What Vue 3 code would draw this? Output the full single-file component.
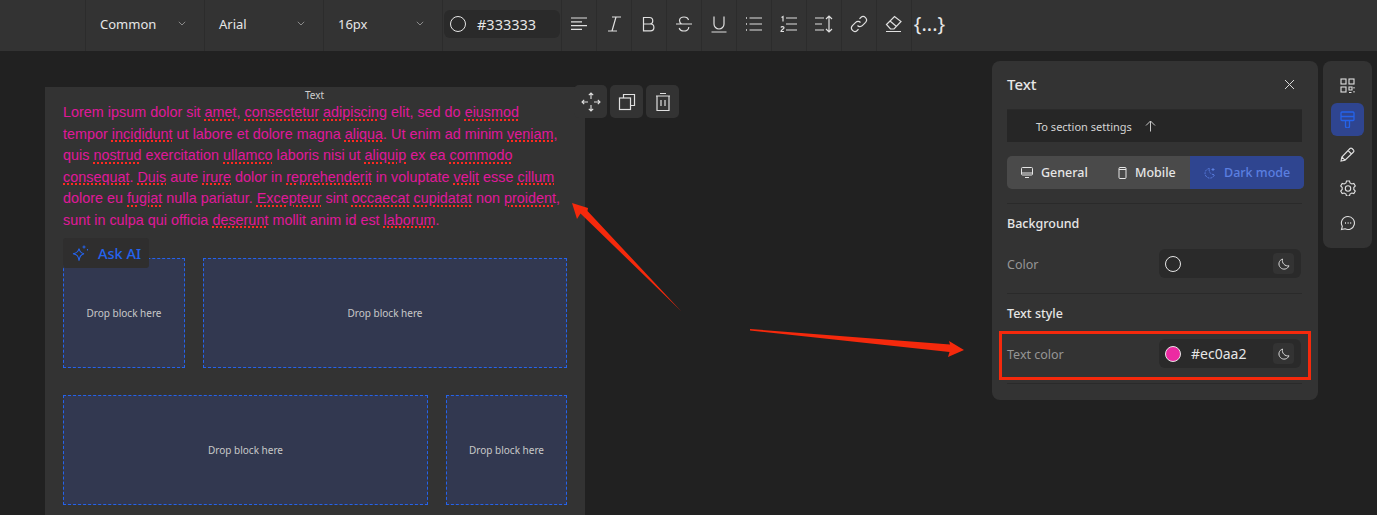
<script setup>
const selects = ['Common', 'Arial', '16px']

const lorem = 'Lorem ipsum dolor sit amet, consectetur adipiscing elit, sed do eiusmod tempor incididunt ut labore et dolore magna aliqua. Ut enim ad minim veniam, quis nostrud exercitation ullamco laboris nisi ut aliquip ex ea commodo consequat. Duis aute irure dolor in reprehenderit in voluptate velit esse cillum dolore eu fugiat nulla pariatur. Excepteur sint occaecat cupidatat non proident, sunt in culpa qui officia deserunt mollit anim id est laborum.'

// words the browser spellchecker flagged
const flagged = ['amet', 'consectetur', 'adipiscing', 'eiusmod', 'incididunt', 'aliqua', 'veniam', 'nostrud', 'ullamco', 'aliquip', 'commodo', 'consequat', 'Duis', 'irure', 'reprehenderit', 'velit', 'cillum', 'fugiat', 'Excepteur', 'occaecat', 'cupidatat', 'proident', 'deserunt', 'laborum']

const words = lorem.split(' ').map((raw) => {
  const word = raw.replace(/[.,]/g, '')
  return { word, tail: raw.slice(word.length), bad: flagged.includes(word) }
})

const dropRows = [
  ['narrow', 'wide'],
  ['wide', 'narrow']
]
</script>

<template>
  <div class="page">
    <header class="toolbar">
      <div class="tb-spacer"></div>
      <div v-for="s in selects" :key="s" class="tb-select">
        <span>{{ s }}</span>
        <svg width="8" height="5" viewBox="0 0 8 5" fill="none" stroke="#8a8a8a" stroke-width="1"><path d="M.8.8 4 4l3.2-3.2" /></svg>
      </div>
      <div class="tb-color">
        <div class="color-box">
          <i class="dot"></i>
          <span>#333333</span>
        </div>
      </div>
      <button class="tb-btn">
        <svg width="18" height="18" viewBox="0 0 18 18" stroke="currentColor" stroke-width="1.2"><path d="M1 3h16M1 6.800h11M1 10.600h16M1 14.400h11" /></svg>
      </button>
      <button class="tb-btn">
        <svg width="18" height="18" viewBox="0 0 18 18" fill="none" stroke="currentColor" stroke-width="1.2"><path d="M7 2h9M3 16h9M11 2 7 16" /></svg>
      </button>
      <button class="tb-btn">
        <svg width="18" height="18" viewBox="0 0 18 18" fill="none" stroke="currentColor" stroke-width="1.2"><path d="M3.500 2.500h6a3.200 3.200 0 0 1 0 6.500h-6zM3.500 9h7a3.400 3.400 0 0 1 0 6.800h-7z" /></svg>
      </button>
      <button class="tb-btn">
        <svg width="18" height="18" viewBox="0 0 18 18" fill="none" stroke="currentColor" stroke-width="1.2"><path d="M1 9h16M13.500 5C13 3 11 2 9 2 6.500 2 4.500 3.300 4.500 5.500c0 1.300.6 2.500 2 3.500M13.800 12c0 2.500-2.300 4-4.800 4-2.300 0-4.300-1-4.800-3" /></svg>
      </button>
      <button class="tb-btn">
        <svg width="18" height="18" viewBox="0 0 18 18" fill="none" stroke="currentColor" stroke-width="1.200"><path d="M4 1.500V9a5 5 0 0 0 10 0V1.500M1.500 17h15" /></svg>
      </button>
      <button class="tb-btn">
        <svg width="18" height="18" viewBox="0 0 18 18" fill="none" stroke="currentColor" stroke-width="1.200"><path d="M4.500 3h12.500M4.500 9h12.500M4.500 15h12.500" /><path d="M1 3h1M1 9h1M1 15h1" stroke-width="1.600" /></svg>
      </button>
      <button class="tb-btn">
        <svg width="18" height="18" viewBox="0 0 18 18" fill="none" stroke="currentColor" stroke-width="1.200"><path d="M6 3h11M6 9h11M6 15h11" /><path d="M1.500 2.500 3 1.500v5M1 12.500c.3-1.300 3-1.300 3 .2 0 1.300-3 2-3 3.800h3" /></svg>
      </button>
      <button class="tb-btn">
        <svg width="20" height="18" viewBox="0 0 20 18" fill="none" stroke="currentColor" stroke-width="1.200"><path d="M1 3h9M1 9h7M1 15h9" /><path d="M15 1v16M12 4l3-3 3 3M12 14l3 3 3-3" /></svg>
      </button>
      <button class="tb-btn">
        <svg width="18" height="18" viewBox="0 0 18 18" fill="none" stroke="currentColor" stroke-width="1.200"><path d="M7.500 10.500a3.300 3.300 0 0 0 4.800.1l3.300-3.300a3.400 3.400 0 0 0-4.800-4.800L9.500 3.800" /><path d="M10.500 7.500a3.300 3.300 0 0 0-4.800-.1l-3.300 3.300a3.400 3.400 0 0 0 4.800 4.800l1.300-1.300" /></svg>
      </button>
      <button class="tb-btn">
        <svg width="18" height="18" viewBox="0 0 18 18" fill="none" stroke="currentColor" stroke-width="1.200"><path d="M1.500 9.500 9.500 1.500l6.500 5-7 7.500H5.500zM5 6l6.500 5.500M1 16.500h15" /></svg>
      </button>
      <div class="tb-var">{...}</div>
    </header>

    <main class="workspace">
      <section class="card">
        <span class="card-label">Text</span>
        <p class="lorem">
          <template v-for="(w, i) in words" :key="i"><span :class="{ bad: w.bad }">{{ w.word }}</span>{{ w.tail }}{{ ' ' }}</template>
        </p>
        <div class="ask-ai">
          <svg width="17" height="17" viewBox="0 0 17 17" fill="none" stroke="currentColor" stroke-width="1.100"><path d="M7 3.500c.6 3 1.800 4.500 5 5.200-3.200.7-4.400 2.400-5 7-.6-4.600-1.800-6.300-6-7 4.200-.7 5.400-2.200 6-5.200z" /><path d="M12 .5v3M10.500 2h3M15.500 4v1.500" /></svg>
          <span>Ask AI</span>
        </div>
        <div class="drops">
          <div v-for="(row, r) in dropRows" :key="r" class="drop-row" :class="row[0]">
            <div v-for="(size, c) in row" :key="c" class="drop">Drop block here</div>
          </div>
        </div>

        <div class="float-tools">
          <button class="float-btn">
            <svg width="20" height="20" viewBox="0 0 20 20" fill="none" stroke="currentColor" stroke-width="1.100"><path d="M10 1v6M10 13v6M1 10h6M13 10h6M7.800 3.200 10 1l2.200 2.200M7.800 16.800 10 19l2.200-2.200M3.200 7.800 1 10l2.200 2.200M16.800 7.800 19 10l-2.200 2.200" /></svg>
          </button>
          <button class="float-btn">
            <svg width="18" height="18" viewBox="0 0 18 18" fill="none" stroke="currentColor" stroke-width="1.200"><rect x="1.500" y="5" width="11" height="11.500" /><path d="M5.500 5V1.500h11V12.500h-4" /></svg>
          </button>
          <button class="float-btn">
            <svg width="18" height="20" viewBox="0 0 18 20" fill="none" stroke="currentColor" stroke-width="1.200"><path d="M2 4h14M6 1.500h6M3 4v14.500h12V4M7 8v6M11 8v6" /></svg>
          </button>
        </div>
      </section>

      <aside class="panel">
        <div class="panel-head">
          <span>Text</span>
          <svg width="11" height="11" viewBox="0 0 11 11" stroke="#d8d8d8" stroke-width="1"><path d="M1 1l9 9M10 1l-9 9" /></svg>
        </div>
        <div class="to-section">
          <span>To section settings</span>
          <svg width="11" height="12" viewBox="0 0 11 12" fill="none" stroke="#c8c8c8" stroke-width="1"><path d="M5.500 11.500V1M1 5.500 5.500 1 10 5.500" /></svg>
        </div>
        <div class="tabs">
          <div class="tab tab-general">
            <svg width="12" height="11" viewBox="0 0 12 11" fill="none" stroke="currentColor" stroke-width="1"><rect x=".5" y=".5" width="11" height="7.500" rx="1" /><path d="M.5 6h11M4 10.500h4" /></svg>
            General
          </div>
          <div class="tab tab-mobile">
            <svg width="9" height="12" viewBox="0 0 9 12" fill="none" stroke="currentColor" stroke-width="1"><rect x="1" y=".5" width="7" height="11" rx="1" /><path d="M1 2.500h7" /></svg>
            Mobile
          </div>
          <div class="tab tab-dark">
            <svg width="12" height="12" viewBox="0 0 12 12" fill="none" stroke="currentColor" stroke-width="1" stroke-dasharray="2 1"><path d="M5.500 1.500a4.800 4.800 0 1 0 5 6 4.500 4.500 0 0 1-5-6z" /><path d="M9 1v3M7.500 2.500h3" stroke-dasharray="none" /></svg>
            Dark mode
          </div>
        </div>

        <div class="group">
          <h4>Background</h4>
          <div class="field">
            <label>Color</label>
            <div class="color-input">
              <i class="dot"></i>
              <span class="hex"></span>
              <button class="moon">
                <svg width="12" height="12" viewBox="0 0 12 12" fill="none" stroke="currentColor" stroke-width="1"><path d="M4.500 1A5.200 5.200 0 1 0 11 7.800 5.500 5.500 0 0 1 4.500 1z" /></svg>
              </button>
            </div>
          </div>
        </div>

        <div class="group">
          <h4>Text style</h4>
          <div class="field">
            <label>Text color</label>
            <div class="color-input">
              <i class="dot pink"></i>
              <span class="hex">#ec0aa2</span>
              <button class="moon">
                <svg width="12" height="12" viewBox="0 0 12 12" fill="none" stroke="currentColor" stroke-width="1"><path d="M4.500 1A5.200 5.200 0 1 0 11 7.800 5.500 5.500 0 0 1 4.500 1z" /></svg>
              </button>
            </div>
          </div>
        </div>
      </aside>

      <nav class="rail">
        <button class="rail-btn">
          <svg width="15" height="15" viewBox="0 0 15 15" fill="none" stroke="currentColor" stroke-width="1.100"><rect x="1" y="1" width="5" height="5" /><rect x="9" y="1" width="5" height="5" /><rect x="1" y="9" width="5" height="5" /><path d="M9 9h3v3H9zM14 9v1.500M14 13v1.500M9 14.500h2.500" /></svg>
        </button>
        <button class="rail-btn active">
          <svg width="15" height="17" viewBox="0 0 15 17" fill="none" stroke="currentColor" stroke-width="1.300"><path d="M2 1h11a1 1 0 0 1 1 1v6.500a1 1 0 0 1-1 1H2a1 1 0 0 1-1-1V2a1 1 0 0 1 1-1zM1 5.500h13M5.500 9.500h4V15a2 2 0 0 1-4 0z" /></svg>
        </button>
        <button class="rail-btn">
          <svg width="15" height="15" viewBox="0 0 15 15" fill="none" stroke="currentColor" stroke-width="1.100"><path d="M1 14l.8-4L10 1.500a1.500 1.500 0 0 1 2 0L13.500 3a1.500 1.500 0 0 1 0 2L5 13.200zM8 3.500 11.500 7M1.800 10 5 13.200" /></svg>
        </button>
        <button class="rail-btn">
          <svg width="16" height="16" viewBox="0 0 16 16" fill="none" stroke="currentColor" stroke-width="1.100"><path d="M6.500 1h3l.5 2 1.800 1 2-.6 1.500 2.600-1.500 1.500v2l1.500 1.500-1.500 2.600-2-.6-1.800 1-.5 2h-3l-.5-2-1.800-1-2 .6L.7 11l1.500-1.500v-2L.7 6l1.500-2.600 2 .6 1.800-1z" /><circle cx="8" cy="8.500" r="2.700" /></svg>
        </button>
        <button class="rail-btn">
          <svg width="16" height="16" viewBox="0 0 16 16" fill="none" stroke="currentColor" stroke-width="1.100"><path d="M8 1.500a6.500 6.500 0 1 1-3 12.300l-3.500.8.800-3.300A6.500 6.500 0 0 1 8 1.500z" /><path d="M5 8h1M7.600 8h1M10.200 8h1" stroke-width="1.300" /></svg>
        </button>
      </nav>
    </main>

    <!-- annotations drawn on top of the screenshot -->
    <svg class="marks" width="1377" height="515" viewBox="0 0 1377 515">
      <polygon fill="#f5290c" points="681,311 587.500,211 588,208 572,203 577,219 580.500,213.500" />
      <polygon fill="#f5290c" points="750,329 950,344.500 949,341 964,350 948,357 949.500,352 750,330.500" />
      <rect x="1000.500" y="332.500" width="309" height="46" fill="none" stroke="#f5290c" stroke-width="3" />
    </svg>
  </div>
</template>

<style scoped>
.page {
  position: relative;
  height: 515px;
  overflow: hidden;
  background: #212121;
  color: #e6e6e6;
  font-family: "Noto Sans", "Open Sans", sans-serif;
}

button {
  padding: 0;
  border: 0;
  background: none;
  color: inherit;
  display: flex;
  align-items: center;
  justify-content: center;
}

/* 顶部工具栏 */
.toolbar {
  display: flex;
  height: 51px;
  background: #333;
}
.tb-spacer {
  width: 85px;
  border-right: 1px solid #2c2c2c;
}
.tb-select {
  width: 119px;
  box-sizing: border-box;
  display: flex;
  align-items: center;
  justify-content: space-between;
  padding: 0 18px 4px 14px;
  border-right: 1px solid #2c2c2c;
  font-size: 13px;
}
.tb-color {
  width: 119px;
  box-sizing: border-box;
  display: flex;
  align-items: center;
  padding: 0 1px 3px 1px;
  border-right: 1px solid #2c2c2c;
}
.color-box {
  flex: 1;
  height: 28px;
  display: flex;
  align-items: center;
  gap: 11px;
  padding-left: 6px;
  border-radius: 6px;
  background: #2a2a2a;
  font-size: 14.500px;
}
.tb-btn {
  width: 35px;
  height: 51px;
  box-sizing: border-box;
  padding-bottom: 3px;
  border-right: 1px solid #2c2c2c;
  color: #e0e0e0;
}
.tb-var {
  width: 35px;
  line-height: 47px;
  text-align: center;
  font-size: 20px;
  white-space: nowrap;
}
.dot {
  display: block;
  flex: none;
  width: 16px;
  height: 16px;
  box-sizing: border-box;
  border: 1px solid #e6e6e6;
  border-radius: 50%;
}
.dot.pink {
  background: #ec2aa2;
}

/* 画布 */
.workspace {
  display: flex;
  align-items: flex-start;
  padding: 10px 5px 0 45px;
}
.card {
  position: relative;
  flex: none;
  width: 540px;
  height: 440px;
  margin-top: 26px;
  box-sizing: border-box;
  padding: 15px 18px 0;
  background: #333;
}
.card-label {
  position: absolute;
  top: 1px;
  left: 260px;
  font-size: 10px;
  line-height: 14px;
  color: #cfcfcf;
}
.lorem {
  margin: 0 0 26px;
  font-family: "Liberation Sans", Arial, sans-serif;
  font-size: 14.4px;
  line-height: 21.6px;
  color: #e0189a;
}
.bad {
  text-decoration: underline dotted #ff2a20 1.5px;
  text-underline-offset: 2px;
}
.ask-ai {
  position: absolute;
  top: 151px;
  left: 18px;
  width: 86px;
  height: 30px;
  box-sizing: border-box;
  display: flex;
  align-items: center;
  gap: 9px;
  padding-left: 9px;
  background: #2f2e2e;
  border-radius: 3px;
  color: #2563eb;
  font-size: 14.500px;
  font-weight: 500;
}
.drops {
  display: flex;
  flex-direction: column;
  gap: 27px;
}
.drop-row {
  display: grid;
  column-gap: 18px;
}
.drop-row.narrow {
  grid-template-columns: 122px 364px;
}
.drop-row.wide {
  grid-template-columns: 365px 121px;
}
.drop {
  height: 110px;
  box-sizing: border-box;
  display: flex;
  align-items: center;
  justify-content: center;
  border: 1px dashed #2563eb;
  background: #323850;
  color: #c8c8c8;
  font-size: 10px;
}
.float-tools {
  position: absolute;
  top: -2px;
  left: 529px;
  display: flex;
  gap: 3px;
}
.float-btn {
  width: 33px;
  height: 33px;
  border-radius: 5px;
  background: #333;
  color: #e0e0e0;
}

/* 右侧设置面板 */
.panel {
  flex: none;
  width: 326px;
  height: 339px;
  margin-left: 407px;
  box-sizing: border-box;
  padding: 0 16px 0 15px;
  border-radius: 8px;
  background: #333;
}
.panel-head {
  height: 49px;
  display: flex;
  align-items: center;
  justify-content: space-between;
  padding: 0 7px 2px 0;
  border-bottom: 1px solid #2a2a2a;
  font-size: 15px;
  font-weight: 500;
  box-sizing: border-box;
}
.to-section {
  height: 32px;
  display: flex;
  align-items: center;
  gap: 13px;
  padding-left: 29px;
  background: #262626;
  font-size: 11px;
  color: #d4d4d4;
}
.tabs {
  display: flex;
  width: 297px;
  height: 33px;
  margin: 14px 0;
  overflow: hidden;
  border-radius: 5px;
  background: #4a4a4a;
  font-size: 12.500px;
  font-weight: 500;
}
.tab {
  display: flex;
  align-items: center;
  gap: 8px;
  box-sizing: border-box;
}
.tab-general {
  width: 94px;
  padding-left: 14px;
}
.tab-mobile {
  width: 89px;
  padding-left: 17px;
}
.tab-dark {
  width: 114px;
  padding-left: 14px;
  background: #2f4590;
  color: #5b7fe0;
}
.group {
  border-top: 1px solid #2a2a2a;
  height: 90px;
  box-sizing: border-box;
}
.group:last-child {
  height: 91px;
  border-bottom: 1px solid #2a2a2a;
}
.group h4 {
  margin: 0;
  padding-top: 11px;
  font-size: 12.500px;
  line-height: 18px;
  font-weight: 500;
}
.field {
  display: flex;
  align-items: center;
  justify-content: space-between;
  margin-top: 16px;
  padding-right: 1px;
}
.field label {
  padding-top: 1px;
  font-size: 12.500px;
  color: #969696;
}
.color-input {
  width: 142px;
  height: 29px;
  box-sizing: border-box;
  display: flex;
  align-items: center;
  gap: 10px;
  padding: 0 7px 0 6px;
  border-radius: 6px;
  background: #2a2a2a;
}
.hex {
  flex: 1;
  font-size: 14px;
}
.moon {
  width: 21px;
  height: 21px;
  border-radius: 4px;
  background: #333;
  color: #d8d8d8;
}

/* 最右图标栏 */
.rail {
  flex: none;
  width: 49px;
  height: 187px;
  margin-left: 5px;
  box-sizing: border-box;
  padding-top: 8px;
  display: flex;
  flex-direction: column;
  align-items: center;
  gap: 1.300px;
  border-radius: 8px;
  background: #333;
}
.rail-btn {
  width: 33px;
  height: 33px;
  border-radius: 6px;
  color: #e0e0e0;
}
.rail-btn.active {
  background: #2f4590;
  color: #2563eb;
}
.marks {
  position: absolute;
  top: 0;
  left: 0;
  pointer-events: none;
}
</style>
